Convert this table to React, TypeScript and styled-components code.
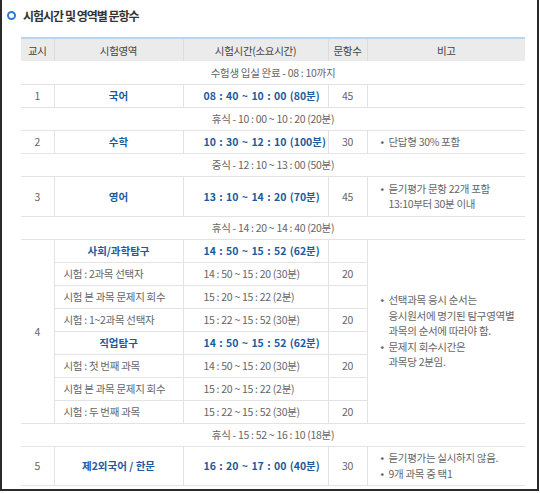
import React from "react";
import styled, { createGlobalStyle } from "styled-components";

const GlobalStyle = createGlobalStyle`
  body {
    margin: 0;
    background: #fff;
    font-family: "Noto Sans CJK KR", "Noto Sans", sans-serif;
  }
`;

const Frame = styled.div`
  width: 539px;
  height: 491px;
  box-sizing: border-box;
  border: 2px solid #2a2a2a;
  border-top: none;
  overflow: hidden;
`;

const Title = styled.h2`
  display: flex;
  align-items: center;
  gap: 7px;
  height: 30px;
  margin: 0 0 7px;
  padding-left: 5px;
  font-size: 12px;
  font-weight: 700;
  letter-spacing: -1px;
  color: #333;
`;

const Ring = styled.span`
  width: 9px;
  height: 9px;
  box-sizing: border-box;
  border: 2px solid #2a7ccc;
  border-radius: 50%;
`;

const Table = styled.table`
  margin-left: 19px;
  width: 504px;
  table-layout: fixed;
  border-collapse: collapse;
  font-size: 10.5px;
  color: #666;
  letter-spacing: -0.3px;
`;

const Row = styled.tr<{ $h?: number }>`
  height: ${({ $h }) => $h ?? 23}px;
`;

const HeadRow = styled.tr`
  height: 23px;
  background: #ebebeb;
  border-top: 2px solid #b9d5ee;
`;

const HeadCell = styled.th<{ $first?: boolean }>`
  padding: 0;
  font-weight: 400;
  font-size: 10.5px;
  color: #444;
  text-align: center;
  border-left: ${({ $first }) => ($first ? "none" : "1px solid #dcdcdc")};
`;

const cellBase = `
  padding: 0;
  border-bottom: 1px solid #e3e3e3;
  border-left: 1px solid #e3e3e3;
  vertical-align: middle;
  white-space: nowrap;
`;

const strongText = `
  font-size: 10.5px;
  font-weight: 700;
  color: #1b5a9e;
  letter-spacing: 0;
`;

const NumCell = styled.td`
  ${cellBase}
  border-left: none;
  text-align: center;
`;

const BreakCell = styled.td`
  ${cellBase}
  border-left: none;
  text-align: center;
`;

const SubjectCell = styled.td<{ $strong?: boolean }>`
  ${cellBase}
  text-align: ${({ $strong }) => ($strong ? "center" : "left")};
  padding-left: ${({ $strong }) => ($strong ? 0 : 9)}px;
  ${({ $strong }) => $strong && strongText}
`;

const TimeCell = styled.td<{ $strong?: boolean }>`
  ${cellBase}
  padding-left: 20px;
  ${({ $strong }) => $strong && strongText}
  ${({ $strong }) => $strong && "word-spacing: 1px;"}
`;

const CountCell = styled.td`
  ${cellBase}
  text-align: center;
`;

const NoteCell = styled.td`
  ${cellBase}
  padding-left: 13px;
`;

const Notes = styled.ul`
  margin: 0;
  padding: 0;
  list-style: none;
  line-height: 15.5px;
`;

const Note = styled.li`
  display: flex;
`;

const Dot = styled.span`
  width: 8px;
  flex: none;
`;

type NoteItem = string[];

const NoteList: React.FC<{ items: NoteItem[] }> = ({ items }) => (
  <Notes>
    {items.map((lines, i) => (
      <Note key={i}>
        <Dot>•</Dot>
        <div>
          {lines.map((l, j) => (
            <div key={j}>{l}</div>
          ))}
        </div>
      </Note>
    ))}
  </Notes>
);

const Break: React.FC<{ text: string }> = ({ text }) => (
  <Row>
    <BreakCell colSpan={5}>{text}</BreakCell>
  </Row>
);

const inquiry = [
  { name: "사회/과학탐구", time: "14 : 50 ~ 15 : 52 (62분)", count: "", strong: true },
  { name: "시험 : 2과목 선택자", time: "14 : 50 ~ 15 : 20 (30분)", count: "20" },
  { name: "시험 본 과목 문제지 회수", time: "15 : 20 ~ 15 : 22 (2분)", count: "" },
  { name: "시험 : 1~2과목 선택자", time: "15 : 22 ~ 15 : 52 (30분)", count: "20" },
  { name: "직업탐구", time: "14 : 50 ~ 15 : 52 (62분)", count: "", strong: true },
  { name: "시험 : 첫 번째 과목", time: "14 : 50 ~ 15 : 20 (30분)", count: "20" },
  { name: "시험 본 과목 문제지 회수", time: "15 : 20 ~ 15 : 22 (2분)", count: "" },
  { name: "시험 : 두 번째 과목", time: "15 : 22 ~ 15 : 52 (30분)", count: "20" },
];

export default function App() {
  return (
    <>
      <GlobalStyle />
      <Frame>
        <Title>
          <Ring />
          시험시간 및 영역별 문항수
        </Title>
        <Table>
          <colgroup>
            <col style={{ width: 33 }} />
            <col style={{ width: 129 }} />
            <col style={{ width: 145 }} />
            <col style={{ width: 39 }} />
            <col style={{ width: 158 }} />
          </colgroup>
          <thead>
            <HeadRow>
              <HeadCell $first>교시</HeadCell>
              <HeadCell>시험영역</HeadCell>
              <HeadCell>시험시간(소요시간)</HeadCell>
              <HeadCell>문항수</HeadCell>
              <HeadCell>비고</HeadCell>
            </HeadRow>
          </thead>
          <tbody>
            <Break text="수험생 입실 완료 - 08 : 10까지" />
            <Row>
              <NumCell>1</NumCell>
              <SubjectCell $strong>국어</SubjectCell>
              <TimeCell $strong>08 : 40 ~ 10 : 00 (80분)</TimeCell>
              <CountCell>45</CountCell>
              <NoteCell />
            </Row>
            <Break text="휴식 - 10 : 00 ~ 10 : 20 (20분)" />
            <Row>
              <NumCell>2</NumCell>
              <SubjectCell $strong>수학</SubjectCell>
              <TimeCell $strong>10 : 30 ~ 12 : 10 (100분)</TimeCell>
              <CountCell>30</CountCell>
              <NoteCell>
                <NoteList items={[["단답형 30% 포함"]]} />
              </NoteCell>
            </Row>
            <Break text="중식 - 12 : 10 ~ 13 : 00 (50분)" />
            <Row $h={40}>
              <NumCell>3</NumCell>
              <SubjectCell $strong>영어</SubjectCell>
              <TimeCell $strong>13 : 10 ~ 14 : 20 (70분)</TimeCell>
              <CountCell>45</CountCell>
              <NoteCell>
                <NoteList items={[["듣기평가 문항 22개 포함", "13:10부터 30분 이내"]]} />
              </NoteCell>
            </Row>
            <Break text="휴식 - 14 : 20 ~ 14 : 40 (20분)" />
            {inquiry.map((r, i) => (
              <Row key={i}>
                {i === 0 && <NumCell rowSpan={8}>4</NumCell>}
                <SubjectCell $strong={r.strong}>{r.name}</SubjectCell>
                <TimeCell $strong={r.strong}>{r.time}</TimeCell>
                <CountCell>{r.count}</CountCell>
                {i === 0 && (
                  <NoteCell rowSpan={8}>
                    <NoteList
                      items={[
                        ["선택과목 응시 순서는", "응시원서에 명기된 탐구영역별", "과목의 순서에 따라야 함."],
                        ["문제지 회수시간은", "과목당 2분임."],
                      ]}
                    />
                  </NoteCell>
                )}
              </Row>
            ))}
            <Break text="휴식 - 15 : 52 ~ 16 : 10 (18분)" />
            <Row $h={39}>
              <NumCell>5</NumCell>
              <SubjectCell $strong>제2외국어 / 한문</SubjectCell>
              <TimeCell $strong>16 : 20 ~ 17 : 00 (40분)</TimeCell>
              <CountCell>30</CountCell>
              <NoteCell>
                <NoteList items={[["듣기평가는 실시하지 않음."], ["9개 과목 중 택1"]]} />
              </NoteCell>
            </Row>
          </tbody>
        </Table>
      </Frame>
    </>
  );
}
